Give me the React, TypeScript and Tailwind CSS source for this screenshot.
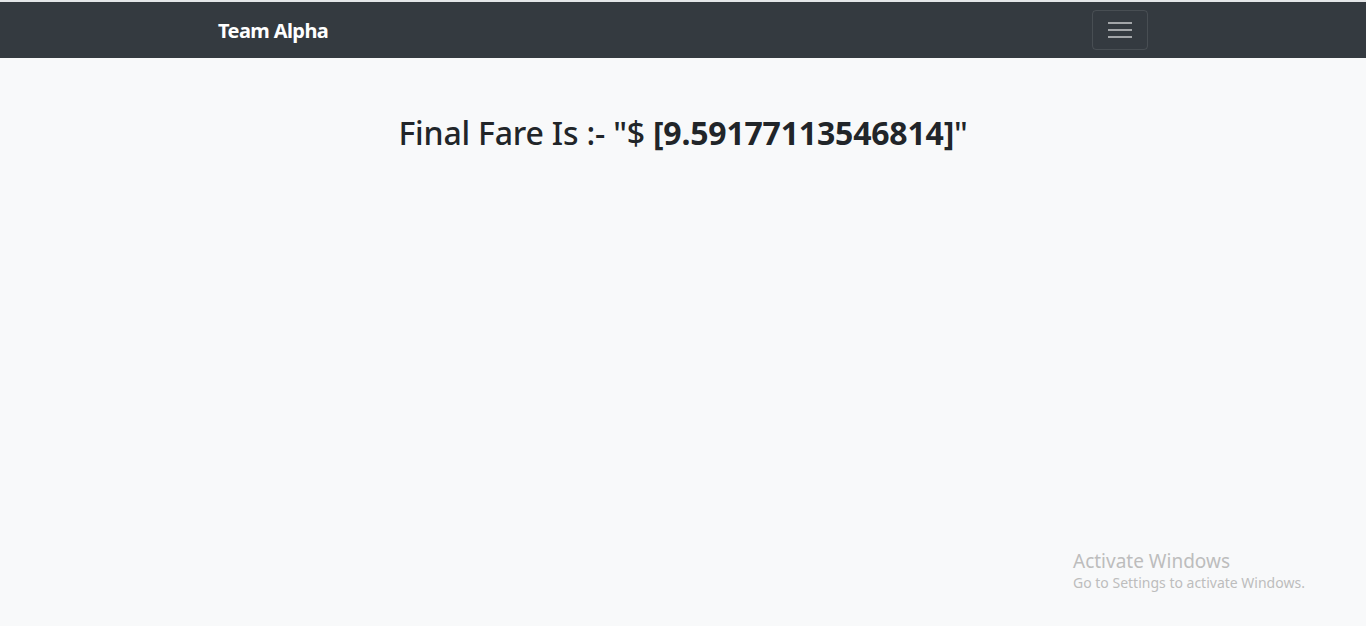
import React from "react";

export default function App() {
  return (
    <div className="min-h-[626px] bg-[#f8f9fa] flex flex-col" style={{ fontFamily: '"Noto Sans", "Open Sans", sans-serif' }}>
      <div className="h-[2px] bg-[#e4e6e8]" />
      <nav className="h-[56px] bg-[#343a40]">
        <div className="w-[960px] mx-auto px-[15px] h-full flex items-center justify-between">
          <span className="text-white text-[20px] font-bold tracking-[-0.6px] pt-[2px]">Team Alpha</span>
          <button className="w-[56px] h-[40px] border border-[rgba(255,255,255,0.1)] rounded-[4px] flex flex-col items-center justify-center gap-[5px]">
            <span className="block w-[24px] h-[2px] bg-[rgba(255,255,255,0.55)]" />
            <span className="block w-[24px] h-[2px] bg-[rgba(255,255,255,0.55)]" />
            <span className="block w-[24px] h-[2px] bg-[rgba(255,255,255,0.55)]" />
          </button>
        </div>
      </nav>
      <div className="flex-1 relative">
        <h2 className="text-center text-[#212529] text-[32px] font-medium mt-[56px] leading-[1.2] tracking-[-0.2px]">
          Final Fare Is :- "$ <b className="font-bold">[9.59177113546814]</b>"
        </h2>
        <div className="absolute left-[1073px] top-[490px] text-[#bdbdbd]">
          <div className="text-[19px] leading-[24px] pt-[1px]">Activate Windows</div>
          <div className="text-[14px] leading-[20px]">Go to Settings to activate Windows.</div>
        </div>
      </div>
    </div>
  );
}
